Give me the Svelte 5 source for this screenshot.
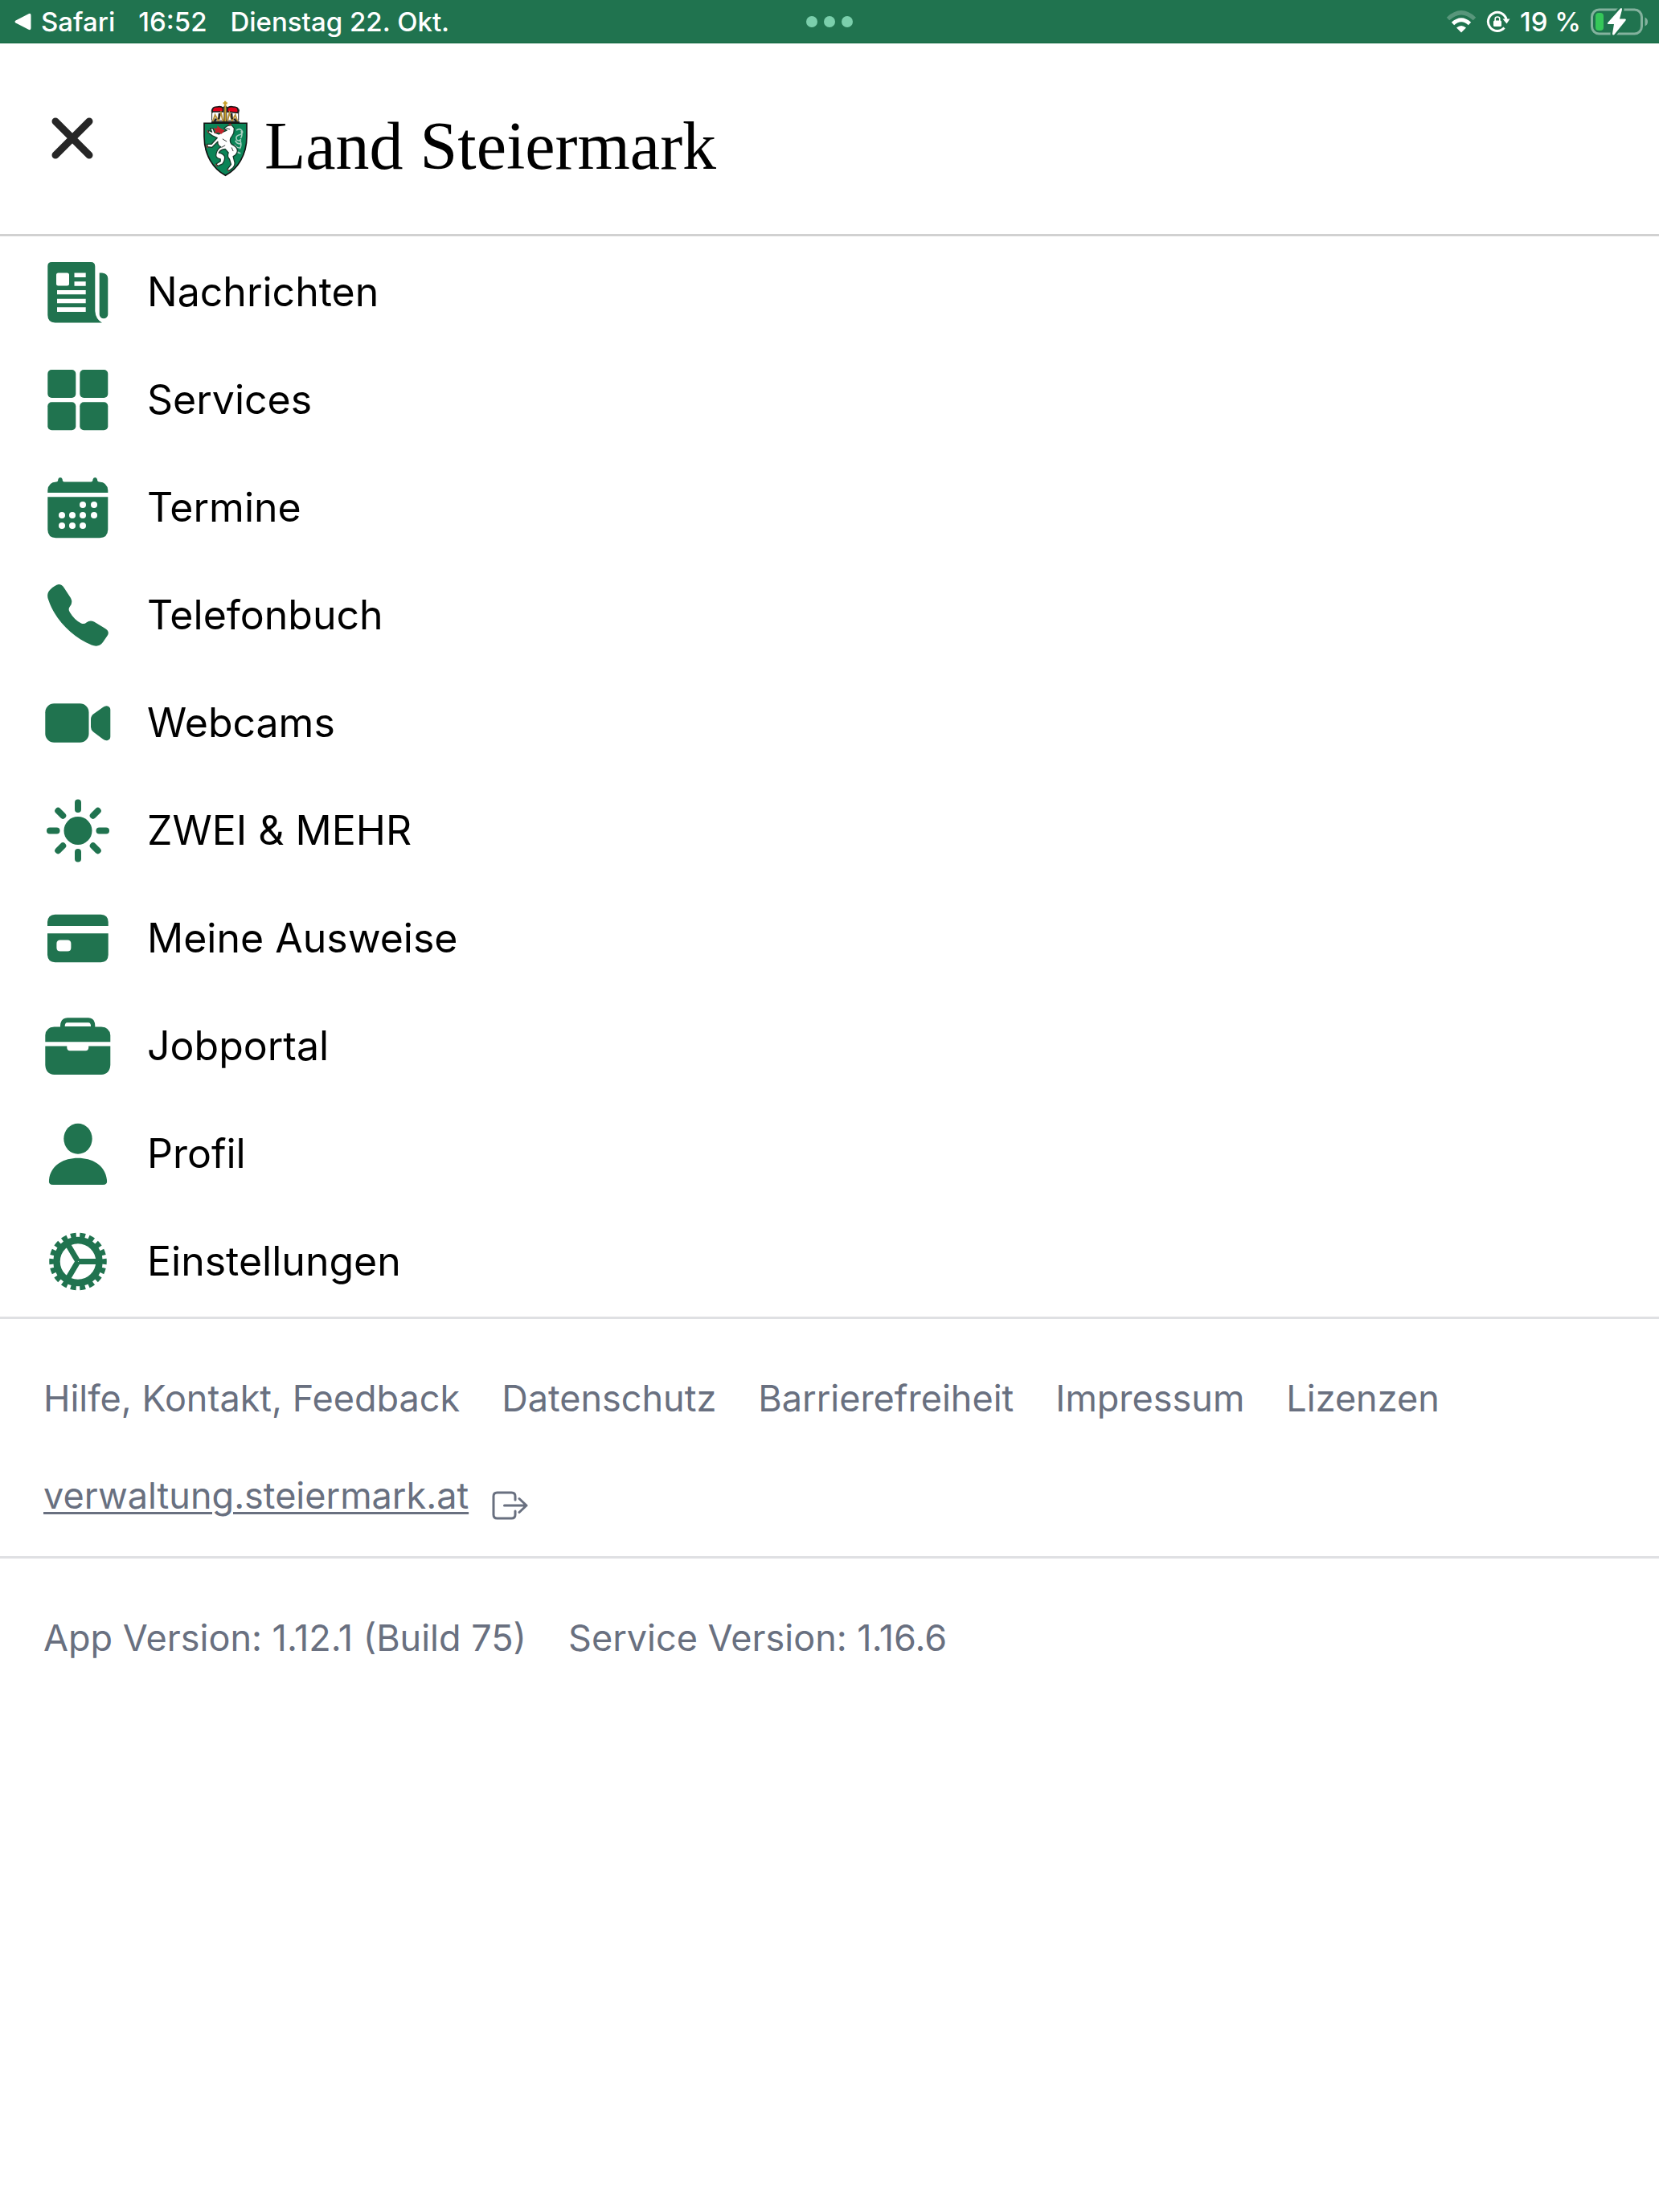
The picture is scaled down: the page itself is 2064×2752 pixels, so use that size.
<script>
  const menu = [
    { id: 'news', label: 'Nachrichten' },
    { id: 'services', label: 'Services' },
    { id: 'events', label: 'Termine' },
    { id: 'phone', label: 'Telefonbuch' },
    { id: 'webcams', label: 'Webcams' },
    { id: 'family', label: 'ZWEI & MEHR' },
    { id: 'cards', label: 'Meine Ausweise' },
    { id: 'jobs', label: 'Jobportal' },
    { id: 'profile', label: 'Profil' },
    { id: 'settings', label: 'Einstellungen' }
  ];

  const links = ['Hilfe, Kontakt, Feedback', 'Datenschutz', 'Barrierefreiheit', 'Impressum', 'Lizenzen'];

  const rays = [0, 45, 90, 135, 180, 225, 270, 315];

  // centres of the small dots on the calendar sheet
  const days = [
    [51, 42], [65, 42],
    [25, 55], [38, 55], [51, 55], [65, 55],
    [25, 68], [38, 68], [51, 68]
  ];
</script>

<div class="status-bar">
  <div class="status-left">
    <span class="back-app">
      <svg width="26" height="22" viewBox="-5 0 26 22" aria-hidden="true">
        <path d="M1.500 9.500 17.500 1.200Q20.500 0 20.500 3V19Q20.500 22 17.500 20.800L1.500 12.500Q-.5 11 1.500 9.500Z" fill="#fff" />
      </svg>
      Safari
    </span>
    <span>16:52</span>
    <span>Dienstag 22. Okt.</span>
  </div>
  <div class="dots"><i></i><i></i><i></i></div>
  <div class="status-right">
    <svg width="38" height="28" viewBox="0 0 38 28" aria-hidden="true">
      <path d="M2.500 10.500Q19-5 35.500 10.500" fill="none" stroke="#fff" stroke-opacity=".25" stroke-width="5" />
      <path d="M8.500 16.500Q19 7 29.500 16.500" fill="none" stroke="#fff" stroke-width="5" />
      <path d="M13 21.500Q19 16.500 25 21.500L19 27.500Z" fill="#fff" />
    </svg>
    <svg width="30" height="28" viewBox="0 0 30 28" aria-hidden="true">
      <path d="M25 11A11.500 11.500 0 1 0 22.500 21.500" fill="none" stroke="#fff" stroke-width="3" />
      <path d="M20.500 10.500H29.500L25.500 16.500Z" fill="#fff" />
      <rect x="9" y="12.500" width="10" height="7.500" rx="1.500" fill="#fff" />
      <path d="M11.200 13V10.500Q11.200 8 14 8T16.800 10.500V13" fill="none" stroke="#fff" stroke-width="1.600" />
    </svg>
    <span>19 %</span>
    <svg width="72" height="36" viewBox="0 0 72 36" aria-hidden="true">
      <rect x="1.500" y="3" width="62" height="30" rx="9" fill="none" stroke="#fff" stroke-opacity=".45" stroke-width="3" />
      <path d="M67.500 12.500Q71 14 71 18T67.500 23.500Z" fill="#fff" fill-opacity=".45" />
      <rect x="6" y="7" width="10" height="22" rx="4" fill="#35c759" />
      <path d="M37 1.500 21 19.500Q20.500 21 22 21H29L27 33Q27 35 29 34.500L43.500 16.500Q44.500 15 43 14.500H36L39 3Q39 0 37 1.500Z" fill="#fff" stroke="#20734f" stroke-width="5" paint-order="stroke" />
    </svg>
  </div>
</div>

<header class="header">
  <button class="close" type="button" aria-label="Schließen">
    <svg width="52" height="52" viewBox="0 0 52 52" aria-hidden="true">
      <path d="M5 5 47 47M47 5 5 47" fill="none" stroke="#262626" stroke-width="9" stroke-linecap="round" />
    </svg>
  </button>
  <div class="brand">
    <svg width="55" height="97" viewBox="40 25 166 290" aria-hidden="true">
      <!-- ducal hat -->
      <path d="M72 105V76Q68 62 80 56H166Q178 62 172 76V105Z" fill="#fff" stroke="#222" stroke-width="3" />
      <path d="M74 76Q70 52 92 54Q106 50 114 58V72H74ZM130 72V58Q140 50 152 54Q174 52 170 76Z" fill="#e2001a" stroke="#1a1a1a" stroke-width="5" />
      <path d="M76 108 84 84 96 106 106 76 114 108M130 108 138 76 148 106 160 84 168 108" fill="none" stroke="#b8923a" stroke-width="6" />
      <path d="M82 108 88 98M100 78 98 100M146 78 148 100M164 108 156 98" fill="none" stroke="#1a1a1a" stroke-width="7" />
      <path d="M122 32V112M114 40H130" fill="none" stroke="#c8a02c" stroke-width="7" />
      <path d="M118 50V110M127 50V110" fill="none" stroke="#3a2a10" stroke-width="3" />
      <path d="M70 111H176" stroke="#222" stroke-width="6" />
      <!-- shield with panther -->
      <path d="M43 115H203V165C203 235 168 288 123 311C78 288 43 235 43 165Z" fill="#0b8457" stroke="#111" stroke-width="5" />
      <path d="M164 142Q176 132 184 142T178 158Q160 162 164 174T182 176M160 180Q166 194 182 192M156 196Q164 208 180 208M160 212Q166 226 180 228M182 144Q188 160 180 172M178 180Q186 196 176 212" fill="none" stroke="#a9cfc0" stroke-width="5" />
      <path d="M118 134 132 124 146 122 156 134 154 152Q148 164 142 172Q138 184 146 194Q164 202 168 216Q168 232 152 240L158 264Q158 278 146 286L136 294 130 288 144 270 138 250Q128 240 134 226L122 212Q104 214 98 226Q114 228 120 240Q122 254 112 268L94 276 88 268 104 258 104 250Q84 246 88 230Q92 212 106 204Q92 198 94 184L72 206 56 204 54 194 70 194 92 170 74 162 58 150 60 142 72 148 66 134 76 134 82 150 98 156 114 148 128 142Z" fill="#fff" stroke="#163b2b" stroke-width="4" stroke-linejoin="round" />
      <path d="M120 142 104 134 92 124 92 134 78 134 86 144 80 152 96 150 108 156 114 148ZM132 122 140 116 148 122Z" fill="#c4232b" />
      <path d="M126 134 140 138M112 174 128 184M108 206 122 198M146 206 152 220" fill="none" stroke="#333" stroke-width="3" />
      <path d="M54 142 60 152M52 196 56 208M86 268 92 278M130 288 136 296" fill="none" stroke="#c4232b" stroke-width="3" />
    </svg>
    <span class="brand-name">Land Steiermark</span>
  </div>
</header>

<nav class="menu" aria-label="Hauptmenü">
  {#each menu as item (item.id)}
    <a class="menu-item" href="#{item.id}">
      <svg width="90" height="90" viewBox="0 0 90 90" fill="currentColor" aria-hidden="true">
        {#if item.id === 'news'}
          <path fill-rule="evenodd" d="M12.500 8H61Q66.300 8 66.300 13.500V69Q67 79 75 83.500H16.500Q7.300 83 7.300 74V13Q7.300 8 12.500 8ZM20.500 21.500Q18 21.500 18 24V35Q18 37.500 20.500 37.500H31.500Q34 37.500 34 35V24Q34 21.500 31.500 21.500ZM40.500 21.500V27H54.700V21.500ZM40.500 32.300V37.700H54.700V32.300ZM19 43V48.300H54.700V43ZM19 53.700V59.200H54.700V53.700ZM19 64.300V70H54.700V64.300Z" />
          <path d="M71.700 21.500H75Q82.300 22 82.300 29V73A5.300 5.300 0 0 1 71.700 73Z" />
        {:else if item.id === 'services'}
          <rect x="7.300" y="8" width="35" height="35" rx="5" />
          <rect x="47.300" y="8" width="35" height="35" rx="5" />
          <rect x="7.300" y="48.300" width="35" height="35" rx="5" />
          <rect x="47.300" y="48.300" width="35" height="35" rx="5" />
        {:else if item.id === 'events'}
          <path d="M7.300 27V24Q8 14 18 13.500Q20.300 13.500 20.300 10.500Q20.500 8 23 8T25.700 10.500Q25.700 13.500 28 13.500H61Q63.500 13.500 63.500 10.500Q64 8 66.300 8T69 10.500Q69 13.500 71.500 13.500Q81.500 14 82.300 24V27Z" />
          <path d="M7.300 32.300H82.300V73Q82 83 72 83.300H17.500Q7.500 83 7.300 73Z" />
          {#each days as [cx, cy]}
            <circle {cx} {cy} r="4" fill="#fff" />
          {/each}
        {:else if item.id === 'phone'}
          <path d="M21 7Q25 7 27.500 11L36 24Q39 30 35 34.500Q32.500 37.500 34.500 41Q40 51 49 55.500Q53 57 55.500 54.500Q60 51 65 53.500L79 62Q85 66 81.500 71L76 79Q71 86 62 82.500C38 73 16 50 8.500 27Q5 19 10.500 13.500Q16 8 21 7Z" />
        {:else if item.id === 'webcams'}
          <rect x="4.300" y="21.300" width="54.200" height="48.500" rx="11" />
          <path d="M61 41Q61 37 64 34.500L76 26Q79 23.800 82 24.500Q85.300 25.500 85.300 29V62.500Q85.300 66 82 67Q79 67.800 76 65.500L64 56.500Q61 54 61 50.500Z" />
        {:else if item.id === 'family'}
          <circle cx="45" cy="45.500" r="17.500" />
          {#each rays as angle}
            <path d="M45 10.500V19" transform="rotate({angle} 45 45.500)" stroke="currentColor" stroke-width="8" stroke-linecap="round" />
          {/each}
        {:else if item.id === 'cards'}
          <path d="M7 30V25Q7.500 16 16.500 15.700H73.500Q82.500 16 82.700 25V30Z" />
          <path fill-rule="evenodd" d="M7 39.300H82.700V66Q82.500 75 73.500 75.300H16.500Q7.500 75 7 66ZM23 47.500Q18.400 47.500 18.400 52V57Q18.400 61.500 23 61.500H32Q36.400 61.500 36.400 57V52Q36.400 47.500 32 47.500Z" />
        {:else if item.id === 'jobs'}
          <path fill-rule="evenodd" d="M23 21.500V20Q23.500 10.500 32 10.200H58Q66 10.500 66.300 20V21.500H74Q84.500 22 85.300 32V40.200H4.300V32Q5 22 15.500 21.500ZM31.500 16.200Q28.500 16.500 28.700 21H61Q61.300 16.500 58 16.200Z" />
          <path d="M4.300 45.500H31.300V47.500Q31.500 51 35 51.200H54.500Q58 51 58.200 47.500V45.500H85.300V69Q84.500 80.500 74 80.900H15.500Q5 80.500 4.300 69Z" />
        {:else if item.id === 'profile'}
          <ellipse cx="45" cy="26.800" rx="17.700" ry="19" />
          <path d="M9 78C11 59 28 50.800 45 50.800S79 59 81 78Q82 84 76 84H14Q8 84 9 78Z" />
        {:else}
          <g fill="none" stroke="currentColor">
            <circle cx="45" cy="45.500" r="26.500" stroke-width="8.500" />
            <circle cx="45" cy="45.500" r="32.500" stroke-width="6.500" pathLength="180" stroke-dasharray="6 4" stroke-dashoffset="3" />
            <path d="M46 45.500H69M45 45.500 32.500 24.500M45 45.500 32.500 66.500" stroke-width="7" />
          </g>
        {/if}
      </svg>
      <span>{item.label}</span>
    </a>
  {/each}
</nav>

<section class="info">
  <div class="link-row">
    {#each links as link}
      <a href="#info">{link}</a>
    {/each}
  </div>
  <a class="external" href="https://verwaltung.steiermark.at">
    <span>verwaltung.steiermark.at</span>
    <svg width="45" height="36" viewBox="0 0 45 36" fill="none" stroke="currentColor" stroke-width="3" stroke-linecap="round" stroke-linejoin="round" aria-hidden="true">
      <path d="M29 11V6.500Q29 2 24.500 2H6.500Q2 2 2 6.500V29.500Q2 34 6.500 34H24.500Q29 34 29 29.500V25" />
      <path d="M15.500 18H43M34 9.500 43 18 34 26.500" />
    </svg>
  </a>
</section>

<footer class="info versions">
  <span>App Version: 1.12.1 (Build 75)</span>
  <span>Service Version: 1.16.6</span>
</footer>

<style>
  :global(body) {
    background: #fff;
    color: #000;
    font-family: Inter, "Liberation Sans", sans-serif;
  }

  a {
    color: inherit;
    text-decoration: none;
  }

  svg {
    display: block;
    flex: none;
  }

  .status-bar {
    display: grid;
    grid-template-columns: 1fr auto 1fr;
    align-items: center;
    height: 54px;
    padding: 0 13px;
    border-bottom: 1px solid #0f683f;
    box-sizing: border-box;
    background: #20734f;
    color: #fff;
    font-size: 33px;
    font-weight: 500;
    white-space: nowrap;
  }

  .status-left,
  .status-right,
  .back-app {
    display: flex;
    align-items: center;
  }

  .status-left {
    gap: 29px;
  }

  .back-app {
    gap: 12px;
  }

  .status-right {
    justify-content: flex-end;
    gap: 12px;
  }

  .dots {
    display: flex;
    gap: 8px;
  }

  .dots i {
    width: 14px;
    height: 14px;
    border-radius: 50%;
    background: #7bcfac;
  }

  .header {
    display: flex;
    align-items: center;
    gap: 137px;
    padding: 69px 64px 71px;
    border-bottom: 3px solid #d1d1d1;
  }

  .close {
    padding: 0;
    border: 0;
    background: none;
  }

  .brand {
    display: flex;
    align-items: flex-end;
    gap: 21px;
  }

  .brand-name {
    font-family: "Liberation Serif", serif;
    font-size: 84px;
    line-height: 76px;
    white-space: nowrap;
  }

  .menu {
    padding: 2px 0;
  }

  .menu-item {
    display: flex;
    align-items: center;
    gap: 41px;
    height: 134px;
    padding: 0 52px;
    font-size: 50px;
  }

  .menu-item svg {
    color: #20734f;
  }

  .info {
    padding: 65px 54px 41px;
    border-top: 3px solid #dfe0e3;
    color: #697080;
    font-size: 45px;
    line-height: 68px;
  }

  .link-row,
  .versions {
    display: flex;
    flex-wrap: wrap;
    gap: 52px;
  }

  .external {
    display: flex;
    align-items: center;
    gap: 29px;
    margin-top: 53px;
  }

  .external span {
    text-decoration: underline;
    text-decoration-thickness: 3px;
    text-underline-offset: 4px;
  }

  .external svg {
    margin-top: 24px;
  }
</style>
